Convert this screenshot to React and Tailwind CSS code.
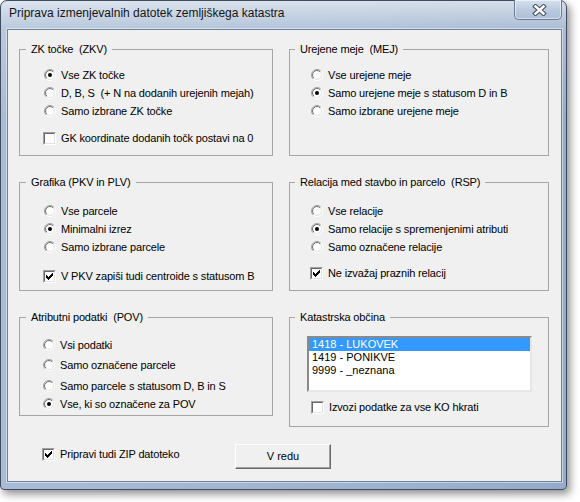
import React from "react";

// classic 3D radio bullet
const Radio = ({ checked }) => (
  <svg width="12" height="12" viewBox="0 0 12 12">
    <defs>
      <linearGradient id="rOuter" x1="0" y1="0" x2="1" y2="1">
        <stop offset="0.45" stopColor="#a0a0a0" />
        <stop offset="0.55" stopColor="#ffffff" />
      </linearGradient>
      <linearGradient id="rInner" x1="0" y1="0" x2="1" y2="1">
        <stop offset="0.45" stopColor="#6e6e6e" />
        <stop offset="0.55" stopColor="#e3e3e3" />
      </linearGradient>
    </defs>
    <circle cx="6" cy="6" r="5.5" fill="none" stroke="url(#rOuter)" />
    <circle cx="6" cy="6" r="4.5" fill="#fff" stroke="url(#rInner)" />
    {checked && <circle cx="6" cy="6" r="2" fill="#000" />}
  </svg>
);

const checkPixels = [
  [6, 0],
  [5, 1], [6, 1],
  [0, 2], [4, 2], [5, 2], [6, 2],
  [0, 3], [1, 3], [3, 3], [4, 3], [5, 3],
  [0, 4], [1, 4], [2, 4], [3, 4], [4, 4],
  [1, 5], [2, 5], [3, 5],
  [2, 6],
];

const Check = ({ checked }) => (
  <div className="w-[13px] h-[13px] border border-t-[#a0a0a0] border-l-[#a0a0a0] border-r-white border-b-white">
    <div className="w-full h-full border border-t-[#696969] border-l-[#696969] border-r-[#e3e3e3] border-b-[#e3e3e3] bg-white">
      {checked && (
        <svg width="9" height="9" viewBox="0 0 9 9" shapeRendering="crispEdges">
          {checkPixels.map(([x, y], i) => (
            <rect key={i} x={x + 1} y={y + 1} width="1" height="1" fill="#000" />
          ))}
        </svg>
      )}
    </div>
  </div>
);

const Option = ({ type = "radio", checked, label, className = "" }) => (
  <div className={`flex items-center h-[18px] ${className}`}>
    <span className="w-[13px] h-[13px] flex items-center justify-center shrink-0">
      {type === "radio" ? <Radio checked={checked} /> : <Check checked={checked} />}
    </span>
    <span className="ml-[5px] whitespace-pre tracking-[-0.15px]">{label}</span>
  </div>
);

const GroupBox = ({ title, className = "", legendClass = "", children }) => (
  <fieldset className={`min-w-0 m-0 p-0 border border-[#a5a5a5] ${className}`}>
    <legend className={`px-[5px] leading-[13px] whitespace-pre tracking-[-0.15px] ${legendClass}`}>{title}</legend>
    {children}
  </fieldset>
);

const obcine = ["1418 - LUKOVEK", "1419 - PONIKVE", "9999 - _neznana"];

const App = () => {
  return (
    <div className="w-[580px] h-[502px] bg-white text-black text-[11px] font-['Liberation_Sans',Arial,sans-serif]">
      <div className="w-[567px] h-[490px] flex flex-col rounded-t-[7px] rounded-b-[4px] border border-[#3e4c60] bg-[linear-gradient(180deg,rgba(255,255,255,0.6)_0px,rgba(255,255,255,0.2)_28px,rgba(255,255,255,0)_120px),linear-gradient(90deg,#a9bcd5,#9fb4d0_60%,#95abc9)] shadow-[3px_4px_8px_rgba(0,0,0,0.45)]">
        {/* title bar */}
        <div className="h-[28px] flex items-start shrink-0">
          <span className="mt-[5px] ml-[8px] text-[12px] leading-[15px] text-[#151515]">
            Priprava izmenjevalnih datotek zemljiškega katastra
          </span>
          <div className="ml-auto mr-[4px] -mt-[1px] w-[48px] h-[20px] flex items-center justify-center rounded-b-[5px] border border-t-0 border-[#6a7a91] bg-[linear-gradient(180deg,#d6e1ee,#b9c9de_55%,#aebfd7)] shadow-[inset_0_0_0_1px_rgba(255,255,255,0.55)]">
            <svg width="15" height="12" viewBox="0 0 15 12" className="ml-[2px]">
              <path d="M3.5 2.5 L11.5 9.5 M11.5 2.5 L3.5 9.5" stroke="#4b5566" strokeWidth="4.6" strokeLinecap="square" />
              <path d="M3.5 2.5 L11.5 9.5 M11.5 2.5 L3.5 9.5" stroke="#ffffff" strokeWidth="2.4" strokeLinecap="square" />
            </svg>
          </div>
        </div>

        {/* client area */}
        <div className="ml-[6px] w-[555px] h-[453px] border border-[#6f829c] bg-[#f0f0f0] pt-[13px] pl-[11px] shadow-[0_0_0_1px_rgba(255,255,255,0.45)]">
          <div className="flex gap-[16px]">
            <div className="w-[254px] flex flex-col gap-[20px]">
              <GroupBox title="ZK točke  (ZKV)" className="h-[113px]" legendClass="ml-[6px]">
                <div className="pt-[10px] pl-[23px]">
                  <Option checked label="Vse ZK točke" />
                  <Option label="D, B, S  (+ N na dodanih urejenih mejah)" />
                  <Option label="Samo izbrane ZK točke" />
                  <Option type="check" label="GK koordinate dodanih točk postavi na 0" className="mt-[9px]" />
                </div>
              </GroupBox>
              <GroupBox title="Grafika (PKV in PLV)" className="h-[115px]" legendClass="ml-[6px]">
                <div className="pt-[13px] pl-[23px]">
                  <Option label="Vse parcele" />
                  <Option checked label="Minimalni izrez" />
                  <Option label="Samo izbrane parcele" />
                  <Option type="check" checked label="V PKV zapiši tudi centroide s statusom B" className="mt-[11px]" />
                </div>
              </GroupBox>
              <GroupBox title="Atributni podatki  (POV)" className="h-[105px]" legendClass="ml-[6px]">
                <div className="pt-[12px] pl-[22px]">
                  <Option label="Vsi podatki" />
                  <Option label="Samo označene parcele" className="mt-[2px]" />
                  <Option label="Samo parcele s statusom D, B in S" className="mt-[3px]" />
                  <Option checked label="Vse, ki so označene za POV" />
                </div>
              </GroupBox>
            </div>

            <div className="w-[260px] flex flex-col gap-[20px]">
              <GroupBox title="Urejene meje  (MEJ)" className="h-[113px]" legendClass="ml-[5px]">
                <div className="pt-[10px] pl-[20px]">
                  <Option label="Vse urejene meje" />
                  <Option checked label="Samo urejene meje s statusom D in B" />
                  <Option label="Samo izbrane urejene meje" />
                </div>
              </GroupBox>
              <GroupBox title="Relacija med stavbo in parcelo  (RSP)" className="h-[115px]" legendClass="ml-[5px]">
                <div className="pt-[13px] pl-[20px]">
                  <Option label="Vse relacije" />
                  <Option checked label="Samo relacije s spremenjenimi atributi" />
                  <Option label="Samo označene relacije" />
                  <Option type="check" checked label="Ne izvažaj praznih relacij" className="mt-[8px]" />
                </div>
              </GroupBox>
              <GroupBox title="Katastrska občina" className="h-[116px]" legendClass="ml-[5px]">
                <div className="pt-[12px] pl-[17px]">
                  <div className="w-[225px] h-[56px] border-2 border-t-[#8a8a8a] border-l-[#8a8a8a] border-r-[#e6e6e6] border-b-[#e6e6e6] bg-white">
                    {obcine.map((o, i) => (
                      <div
                        key={o}
                        className={`h-[13px] leading-[13px] pl-[3px] whitespace-pre ${i === 0 ? "bg-[#3399ff] text-white" : ""}`}
                      >
                        {o}
                      </div>
                    ))}
                  </div>
                  <Option type="check" label="Izvozi podatke za vse KO hkrati" className="mt-[6px] ml-[4px]" />
                </div>
              </GroupBox>
            </div>
          </div>

          {/* bottom row */}
          <div className="flex items-start mt-[17px]">
            <div className="w-[216px] pl-[23px] pt-[1px]">
              <Option type="check" checked label="Pripravi tudi ZIP datoteko" />
            </div>
            <button className="w-[96px] h-[25px] flex items-center justify-center border border-t-white border-l-white border-r-[#696969] border-b-[#696969] bg-[#f0f0f0] shadow-[inset_-1px_-1px_0_#a0a0a0]">
              V redu
            </button>
          </div>
        </div>
      </div>
    </div>
  );
};

export default App;
